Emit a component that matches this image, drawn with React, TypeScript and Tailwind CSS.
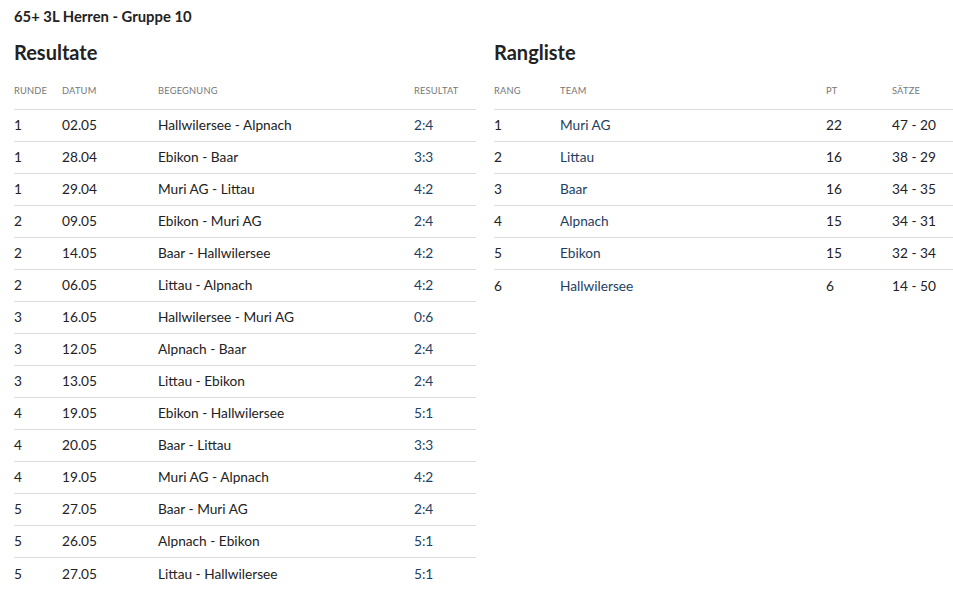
import React from "react";

const results: [string, string, string, string][] = [
  ["1", "02.05", "Hallwilersee - Alpnach", "2:4"],
  ["1", "28.04", "Ebikon - Baar", "3:3"],
  ["1", "29.04", "Muri AG - Littau", "4:2"],
  ["2", "09.05", "Ebikon - Muri AG", "2:4"],
  ["2", "14.05", "Baar - Hallwilersee", "4:2"],
  ["2", "06.05", "Littau - Alpnach", "4:2"],
  ["3", "16.05", "Hallwilersee - Muri AG", "0:6"],
  ["3", "12.05", "Alpnach - Baar", "2:4"],
  ["3", "13.05", "Littau - Ebikon", "2:4"],
  ["4", "19.05", "Ebikon - Hallwilersee", "5:1"],
  ["4", "20.05", "Baar - Littau", "3:3"],
  ["4", "19.05", "Muri AG - Alpnach", "4:2"],
  ["5", "27.05", "Baar - Muri AG", "2:4"],
  ["5", "26.05", "Alpnach - Ebikon", "5:1"],
  ["5", "27.05", "Littau - Hallwilersee", "5:1"],
];

const ranking: [string, string, string, string][] = [
  ["1", "Muri AG", "22", "47 - 20"],
  ["2", "Littau", "16", "38 - 29"],
  ["3", "Baar", "16", "34 - 35"],
  ["4", "Alpnach", "15", "34 - 31"],
  ["5", "Ebikon", "15", "32 - 34"],
  ["6", "Hallwilersee", "6", "14 - 50"],
];

export default function App() {
  return (
    <div
      className="bg-white text-[#222] pl-[14px] pt-[7px] min-h-[590px]"
      style={{ fontFamily: "Lato, 'Open Sans', sans-serif" }}
    >
      <div className="text-[14.8px] font-bold leading-[18px] text-[#222]">65+ 3L Herren - Gruppe 10</div>
      <div className="flex gap-[18px] mt-[15px]">
        <div className="w-[462px]">
          <h2 className="text-[20px] font-bold leading-[24px] text-[#222]">Resultate</h2>
          <div className="grid grid-cols-[48px_96px_256px_62px] mt-[13px] h-[33px] border-b border-[#dcdcdc] items-start pt-[7px] text-[9.3px] uppercase text-[#777] tracking-[0.2px]">
            <div>Runde</div>
            <div>Datum</div>
            <div>Begegnung</div>
            <div>Resultat</div>
          </div>
          {results.map((r, i) => (
            <div
              key={i}
              className={`grid grid-cols-[48px_96px_256px_62px] h-[32px] items-center text-[13.7px] ${i < results.length - 1 ? "border-b border-[#dcdcdc]" : ""}`}
            >
              <div>{r[0]}</div>
              <div>{r[1]}</div>
              <div>{r[2]}</div>
              <div className="text-[#1d3f63]">{r[3]}</div>
            </div>
          ))}
        </div>
        <div className="w-[459px]">
          <h2 className="text-[20px] font-bold leading-[24px] text-[#222]">Rangliste</h2>
          <div className="grid grid-cols-[66px_266px_66px_61px] mt-[13px] h-[33px] border-b border-[#dcdcdc] items-start pt-[7px] text-[9.3px] uppercase text-[#777] tracking-[0.2px]">
            <div>Rang</div>
            <div>Team</div>
            <div>Pt</div>
            <div>Sätze</div>
          </div>
          {ranking.map((r, i) => (
            <div
              key={i}
              className={`grid grid-cols-[66px_266px_66px_61px] h-[32px] items-center text-[13.7px] ${i < ranking.length - 1 ? "border-b border-[#dcdcdc]" : ""}`}
            >
              <div>{r[0]}</div>
              <div className="text-[#1d3f63]">{r[1]}</div>
              <div>{r[2]}</div>
              <div>{r[3]}</div>
            </div>
          ))}
        </div>
      </div>
    </div>
  );
}
